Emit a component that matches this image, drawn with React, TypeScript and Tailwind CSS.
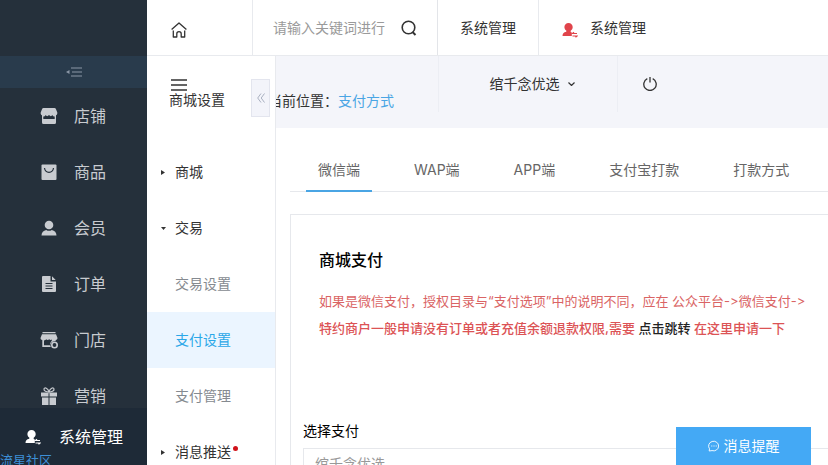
import React from "react";

type IconProps = { className?: string };

function ShopIcon() {
  return (
    <svg className="size-[18px]" viewBox="0 0 18 18" fill="currentColor" aria-hidden="true">
      <path d="M3.500 1h11a1.500 1.500 0 0 1 1.400 1L17.300 5.500c.2 1.400-.4 2.400-1.300 2.800V15.500a1.500 1.500 0 0 1-1.500 1.500h-11A1.500 1.500 0 0 1 2 15.500V8.300C1 7.900.5 6.900.7 5.500L2.100 2a1.500 1.500 0 0 1 1.400-1z" />
      <path d="M3.300 12V9.500c1 0 1.800-.4 2.400-1.500.8 1.500 2 1.500 3.300 0 1.300 1.500 2.500 1.500 3.300 0 .6 1.100 1.400 1.500 2.400 1.500V12z" fill="#25303b" />
    </svg>
  );
}

function GoodsIcon() {
  return (
    <svg className="size-[18px]" viewBox="0 0 18 18" aria-hidden="true">
      <rect x="1.500" y="1.500" width="15" height="15.500" rx="1" fill="currentColor" />
      <path d="M4.500 5c.4 3 2.200 4.300 4.500 4.300S13.100 8 13.500 5" fill="none" stroke="#25303b" strokeWidth="1.200" />
    </svg>
  );
}

function MemberIcon() {
  return (
    <svg className="size-[18px]" viewBox="0 0 18 18" fill="currentColor" aria-hidden="true">
      <circle cx="9" cy="6" r="4.300" />
      <path d="M1.500 16.500c0-3.300 2-5 4.700-5.600 1.700 1.200 3.900 1.200 5.600 0 2.700.6 4.700 2.300 4.700 5.600z" />
    </svg>
  );
}

function OrderIcon() {
  return (
    <svg className="size-[18px]" viewBox="0 0 18 18" aria-hidden="true">
      <path d="M3 1h7.500v5.500H16V16a1 1 0 0 1-1 1H3a1 1 0 0 1-1-1V2a1 1 0 0 1 1-1zM12 1.300 15.700 5H12z" fill="currentColor" />
      <path d="M5.500 8.500h7M5.500 11h7M5.500 13.500h7" stroke="#25303b" strokeWidth="1.200" />
    </svg>
  );
}

function StoreIcon() {
  return (
    <svg className="size-[18px]" viewBox="0 0 18 18" aria-hidden="true">
      <path d="M2.500 1h13v1.300h-13zM2 3.200h14L17.500 7c0 1.200-.8 2-1.800 2v1a4.500 4.500 0 0 0-5 6H2.300V9C1.200 9 .5 8.200.5 7z" fill="currentColor" />
      <path d="M4 9.500c1 0 1.700-.5 2.200-1.200.8 1 2.100 1 3 0 .8 1 2 1 2.700.3v1L10.300 12v2.300H4z" fill="#25303b" />
      <circle cx="14.500" cy="14" r="2.700" fill="none" stroke="currentColor" strokeWidth="1.600" />
    </svg>
  );
}

function GiftIcon() {
  return (
    <svg className="size-[18px]" viewBox="0 0 18 18" aria-hidden="true">
      <path d="M1 5.500h7.500v4H1zM9.500 5.500H17v4H9.500zM2 10.500h6.500V18H2zM9.500 10.500H16V18H9.500z" fill="currentColor" />
      <path d="M9 5C8 1.500 4.500-.3 4 2c-.4 2 2.500 3 5 3 2.500 0 5.400-1 5-3-.5-2.300-4-.5-5 3z" fill="none" stroke="currentColor" strokeWidth="1.200" />
    </svg>
  );
}

function AdminIcon({ className = "" }: IconProps) {
  return (
    <svg className={`size-4 ${className}`} viewBox="0 0 16 16" aria-hidden="true">
      <path d="M6.500 1c2.500 0 4.200 1.700 4.200 4 0 1.700-.8 3-2 3.800v1.100l1.100.6v3.500H.5c0-2.500 1-3.800 3.800-4.300V8.600C3 7.800 2.400 6.600 2.400 5c0-2.300 1.700-4 4.100-4z" fill="currentColor" />
      <path d="M15 11.500h-4.500l1.500-1.300M10.500 14H15l-1.500 1.300" fill="none" stroke="currentColor" strokeWidth="1.200" />
    </svg>
  );
}

function HomeIcon() {
  return (
    <svg className="size-4" viewBox="0 0 16 16" fill="none" stroke="currentColor" strokeWidth="1.300" strokeLinejoin="round" aria-hidden="true">
      <path d="M.6 7.600 8 .9l7.400 6.700M2.300 8.500V15h3.500v-3.200a2.200 2.200 0 0 1 4.400 0V15h3.500V8.500" />
    </svg>
  );
}

function SearchIcon() {
  return (
    <svg className="size-4" viewBox="0 0 16 16" fill="none" stroke="currentColor" strokeWidth="1.600" aria-hidden="true">
      <circle cx="7.500" cy="7.500" r="6.300" />
      <path d="m11.500 12 3 3" strokeWidth="2" />
    </svg>
  );
}

function MenuIcon() {
  return (
    <svg className="h-3 w-4" viewBox="0 0 16 12" stroke="currentColor" strokeWidth="1.300" aria-hidden="true">
      <path d="M0 1h16M0 6h16M0 11h16" />
    </svg>
  );
}

function FoldIcon() {
  return (
    <svg className="h-3 w-4" viewBox="0 0 16 12" aria-hidden="true">
      <path d="M5 2h11M6 6h10M5 10h11" stroke="currentColor" strokeWidth="1.100" />
      <path d="M0 6 3.500 4v4z" fill="currentColor" />
    </svg>
  );
}

function PowerIcon() {
  return (
    <svg className="size-[14px]" viewBox="0 0 14 14" fill="none" stroke="currentColor" strokeWidth="1.300" aria-hidden="true">
      <path d="M4.300 1.700a6.200 6.200 0 1 0 5.400 0M7 0v5.500" />
    </svg>
  );
}

function ChatIcon() {
  return (
    <svg className="size-3" viewBox="0 0 12 12" fill="none" stroke="currentColor" aria-hidden="true">
      <path d="M1.200 11 1.500 8.800A5 4.800 0 1 1 4 10.600z" strokeWidth=".9" />
      <path d="M3.300 6h1M5.500 6h1M7.700 6h1" strokeWidth="1.200" />
    </svg>
  );
}

const mainNav = [
  { label: "店铺", icon: <ShopIcon /> },
  { label: "商品", icon: <GoodsIcon /> },
  { label: "会员", icon: <MemberIcon /> },
  { label: "订单", icon: <OrderIcon /> },
  { label: "门店", icon: <StoreIcon /> },
  { label: "营销", icon: <GiftIcon /> },
];

const tabs = ["微信端", "WAP端", "APP端", "支付宝打款", "打款方式"];

function MainSidebar() {
  return (
    <aside className="relative flex w-[147px] shrink-0 flex-col overflow-hidden bg-[#25303b] pt-14">
      <button aria-label="收起菜单" className="flex h-8 w-full shrink-0 items-center justify-center bg-[#293b4c] text-[#8b97a6]">
        <FoldIcon />
      </button>
      <nav>
        {mainNav.map((item) => (
          <a key={item.label} href="#" className="flex h-14 items-center gap-4 pl-10 text-[16px] text-[#c8cbd0]">
            {item.icon}
            {item.label}
          </a>
        ))}
      </nav>
      <a href="#" className="absolute inset-x-0 bottom-0 flex h-[57px] items-center gap-[18px] bg-[#1e2a37] pl-[25px] text-[16px] text-white">
        <AdminIcon />
        系统管理
      </a>
      <span className="absolute bottom-[-3px] left-0 text-[13px] leading-4 text-[#3d8fd6]">流星社区</span>
    </aside>
  );
}

function TopBar() {
  return (
    <header className="flex h-14 shrink-0 border-b border-[#e8eaee] text-[#333]">
      <a href="#" aria-label="首页" className="flex w-[106px] shrink-0 items-center border-r border-[#e8eaee] pt-1 pl-6">
        <HomeIcon />
      </a>
      <form className="flex w-[185px] shrink-0 items-center gap-4 border-r border-[#e3e5e9] pl-5" onSubmit={(e) => e.preventDefault()}>
        <input aria-label="搜索" placeholder="请输入关键词进行" className="w-[112px] outline-none placeholder:text-[#9a9a9a]" />
        <button aria-label="搜索">
          <SearchIcon />
        </button>
      </form>
      <a href="#" className="flex w-[101px] shrink-0 items-center justify-center border-r border-[#e8eaee]">系统管理</a>
      <a href="#" className="flex items-center gap-3 pl-[23px]">
        <AdminIcon className="mt-1 text-[#e0444b]" />
        系统管理
      </a>
    </header>
  );
}

function SubSidebar() {
  return (
    <aside className="relative w-[129px] shrink-0 border-r border-[#e8eaee] bg-white text-[#333]">
      <div className="flex h-[88px] flex-col items-start pt-[23px] pl-[22px]">
        <button aria-label="菜单" className="ml-[2px]">
          <MenuIcon />
        </button>
        <h2 className="leading-[18px]">商城设置</h2>
      </div>
      <button aria-label="收起" className="absolute top-[23px] right-[5px] flex h-[38px] w-[19px] items-center justify-center border border-[#e3e5ee] bg-[#f3f4fa] text-[#a9b0c0]">
        <svg className="h-[10px] w-2" viewBox="0 0 8 10" fill="none" stroke="currentColor" aria-hidden="true">
          <path d="M4 .5.700 5 4 9.500M7.500.5 4.200 5l3.300 4.500" />
        </svg>
      </button>
      <nav>
        <a href="#" className="flex h-14 items-center gap-[10px] pl-[14px]">
          <svg className="h-[5px] w-1" viewBox="0 0 4 5" fill="currentColor" aria-hidden="true"><path d="M0 0v5l4-2.500z" /></svg>
          商城
        </a>
        <a href="#" className="flex h-14 items-center gap-[9px] pl-[14px]">
          <svg className="h-[3px] w-[5px]" viewBox="0 0 5 3" fill="currentColor" aria-hidden="true"><path d="M0 0h5L2.500 3z" /></svg>
          交易
        </a>
        <a href="#" className="flex h-14 items-center pl-7 text-[#858a90]">交易设置</a>
        <a href="#" className="flex h-14 items-center bg-[#ebf5ff] pl-7 text-[#2aa7e8]">支付设置</a>
        <a href="#" className="flex h-14 items-center pl-7 text-[#858a90]">支付管理</a>
        <a href="#" className="flex h-14 items-center gap-[10px] pl-[14px]">
          <svg className="h-[5px] w-1" viewBox="0 0 4 5" fill="currentColor" aria-hidden="true"><path d="M0 0v5l4-2.500z" /></svg>
          <span>消息推送</span>
          <i className="-mt-2 -ml-2 size-[5px] rounded-full bg-[#d0131b]" />
        </a>
      </nav>
    </aside>
  );
}

function Content() {
  return (
    <main className="min-w-0 flex-1 overflow-hidden">
      <div className="flex h-[72px] bg-[#f4f5fa] text-[#333]">
        <div className="flex w-[162px] shrink-0 pt-9">
          <p className="-ml-2">
            当前位置：<a href="#" className="text-[#4aa5e4]">支付方式</a>
          </p>
        </div>
        <button className="flex h-14 w-[180px] shrink-0 items-center justify-center gap-2 border-x border-[#eceef4] pl-2">
          绾千念优选
          <svg className="h-1 w-[7px]" viewBox="0 0 7 4" fill="none" stroke="currentColor" strokeWidth="1.200" aria-hidden="true"><path d="m.5.500 3 3 3-3" /></svg>
        </button>
        <button aria-label="退出" className="flex h-14 items-center pl-[25px]">
          <PowerIcon />
        </button>
      </div>
      <div className="pt-[22px] pl-[14px]">
        <div role="tablist" className="flex gap-[30px] border-b border-[#e6e8ec] pl-4 text-[#666]">
          {tabs.map((tab, i) => (
            <button
              key={tab}
              role="tab"
              aria-selected={i === 0}
              className={i === 0 ? "-mb-px h-[42px] border-b-2 border-[#4aa5e4] px-3" : "h-[41px] border-b-2 border-transparent px-3"}
            >
              {tab}
            </button>
          ))}
        </div>
        <section className="mt-[22px] h-[400px] border-t border-l border-[#e6e8ec] pt-[33px]">
          <h1 className="pl-7 text-[16px] leading-6 font-medium text-black">商城支付</h1>
          <div className="pt-4 pl-7 text-[13px] leading-[27px] text-[#da6464]">
            <p>如果是微信支付，授权目录与“支付选项”中的说明不同，应在 公众平台-&gt;微信支付-&gt;</p>
            <p className="font-medium text-[#dc5355]">
              特约商户一般申请没有订单或者充值余额退款权限,需要 <a href="#" className="text-[#222]">点击跳转</a> 在这里申请一下
            </p>
          </div>
          <div className="flex flex-col items-start pt-[79px] pl-3">
            <label htmlFor="payment" className="leading-5 text-black">选择支付</label>
            <select id="payment" className="mt-[7px] h-8 w-full appearance-none border border-r-0 border-[#e6e8ec] px-[11px] text-[#999]">
              <option>绾千念优选</option>
            </select>
          </div>
        </section>
      </div>
    </main>
  );
}

export default function App() {
  return (
    <div className="relative flex h-screen overflow-hidden bg-white font-[Inter,'Noto_Sans_CJK_SC',sans-serif] text-[14px] leading-[18px] whitespace-nowrap [font-feature-settings:'calt'_0]">
      <MainSidebar />
      <div className="flex min-w-0 flex-1 flex-col">
        <TopBar />
        <div className="flex min-h-0 flex-1">
          <SubSidebar />
          <Content />
        </div>
      </div>
      <button className="absolute right-[17px] bottom-0 flex h-[38px] w-[135px] items-center justify-center gap-1 bg-[#44a9f5] text-white">
        <ChatIcon />
        消息提醒
      </button>
    </div>
  );
}
